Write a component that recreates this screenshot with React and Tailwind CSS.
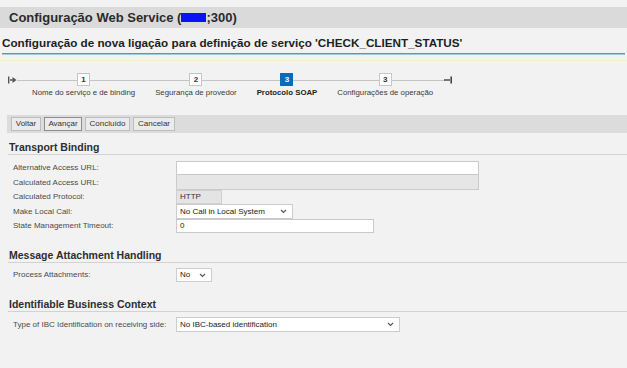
import React from 'react';

const steps = [
  { n: '1', label: 'Nome do serviço e de binding' },
  { n: '2', label: 'Segurança de provedor' },
  { n: '3', label: 'Protocolo SOAP', active: true },
  { n: '3', label: 'Configurações de operação' },
];

const Chevron = () => (
  <svg width="7" height="5" viewBox="0 0 7 5" className="shrink-0">
    <path d="M1 1 L3.5 3.5 L6 1" fill="none" stroke="#555" strokeWidth="1.1" />
  </svg>
);

const SectionTitle = ({ children, className = '' }) => (
  <div className={`ml-[8px] pl-[1px] h-[14px] flex items-center border-b border-[#d2d2d2] text-[10.5px] font-bold text-[#2e2e2e] ${className}`}>
    {children}
  </div>
);

const Row = ({ label, h = 'h-[14px]', children }) => (
  <div className={`grid grid-cols-[176px_1fr] ${h} items-stretch`}>
    <div className="pl-[13px] flex items-center text-[8px] text-[#4a4a4a]">{label}</div>
    <div className="flex">{children}</div>
  </div>
);

const App = () => {
  return (
    <div className="w-[627px] h-[368px] overflow-hidden bg-[#f2f2f2] font-['Liberation_Sans',Arial,sans-serif] text-[#333]">
      {/* Page title */}
      <div className="pt-[7px]">
        <div className="h-[21px] bg-[#dadada] flex items-center pl-[9px] text-[13px] font-bold text-[#2b2b2b]">
          Configuração Web Service (
          <span className="inline-block w-[25px] h-[9px] bg-[#0b12f5]" />
          ;300)
        </div>
      </div>

      <div className="mt-[8px] pl-[2px] h-[14px] flex items-center text-[11.7px] font-bold text-[#1f1f1f]">
        Configuração de nova ligação para definição de serviço 'CHECK_CLIENT_STATUS'
      </div>
      <div className="mt-[3px] mx-[2px] h-[2px] bg-[#3aa3d6] border-b border-[#9fcbe0]" />
      <div className="mt-[5px] h-px bg-[#f6eed0]" />

      {/* Roadmap */}
      <div className="relative h-[54px]">
        <div className="absolute left-[17px] top-[19px] w-[428px] h-px bg-[#c4c4c4]" />
        <svg className="absolute left-[8px] top-[15px]" width="9" height="8" viewBox="0 0 9 8">
          <rect x="0" y="0.5" width="1.4" height="7" fill="#555" />
          <rect x="2" y="3.3" width="3" height="1.4" fill="#555" />
          <path d="M4.5 1 L8.5 4 L4.5 7 Z" fill="#555" />
        </svg>
        <svg className="absolute left-[444px] top-[15px]" width="9" height="8" viewBox="0 0 9 8">
          <rect x="0" y="3.3" width="6" height="1.4" fill="#444" />
          <rect x="6.4" y="0.5" width="1.6" height="7" fill="#444" />
        </svg>
        <div className="relative flex gap-[20px] pl-[32px] pt-[12px]">
          {steps.map((s, i) => (
            <div key={i} className="flex flex-col items-center">
              <div
                className={`w-[13px] h-[13px] flex items-center justify-center text-[8px] font-bold border ${
                  s.active
                    ? 'bg-[#0a6cb8] border-[#0a6cb8] text-white'
                    : 'bg-white border-[#c6c6c6] text-[#333]'
                }`}
              >
                {s.n}
              </div>
              <div
                className={`mt-[2px] leading-[10px] text-[7.8px] whitespace-nowrap ${
                  s.active ? 'font-bold text-[#222]' : 'text-[#3a3a3a]'
                }`}
              >
                {s.label}
              </div>
            </div>
          ))}
        </div>
      </div>

      {/* Toolbar */}
      <div className="ml-[7px] h-[18px] bg-[#dcdcdc] flex items-center gap-[3px] pl-[4px]">
        {[
          ['Voltar', 'w-[30px]'],
          ['Avançar', 'w-[38px]', true],
          ['Concluído', 'w-[45px]'],
          ['Cancelar', 'w-[42px]'],
        ].map(([t, w, focus]) => (
          <div
            key={t}
            className={`${w} h-[14px] flex items-center justify-center text-[8px] text-[#333] bg-[#ebebeb] border ${
              focus ? 'border-[#8d8d8d]' : 'border-[#bdbdbd]'
            }`}
          >
            {t}
          </div>
        ))}
      </div>

      {/* Transport Binding */}
      <SectionTitle className="mt-[8px]">Transport Binding</SectionTitle>
      <div className="mt-[6px] flex flex-col">
        <Row label="Alternative Access URL:">
          <div className="w-[303px] bg-white border border-[#c9c9c9]" />
        </Row>
        <Row label="Calculated Access URL:" h="h-[15px]">
          <div className="w-[303px] bg-[#e6e6e6] border border-[#cbcbcb] border-t-0" />
        </Row>
        <Row label="Calculated Protocol:">
          <div className="w-[46px] bg-[#e4e4e4] border border-[#d0d0d0] flex items-center pl-[3px] text-[8px] text-[#333]">
            HTTP
          </div>
        </Row>
        <Row label="Make Local Call:" h="h-[15px]">
          <div className="w-[117px] bg-white border border-[#cccccc] flex items-center justify-between pl-[3px] pr-[5px] text-[8px] text-[#222]">
            <span>No Call in Local System</span>
            <Chevron />
          </div>
        </Row>
        <Row label="State Management Timeout:">
          <div className="w-[198px] bg-white border border-[#c9c9c9] flex items-center pl-[3px] text-[8px] text-[#222]">
            0
          </div>
        </Row>
      </div>

      {/* Message Attachment Handling */}
      <SectionTitle className="mt-[16px]">Message Attachment Handling</SectionTitle>
      <div className="mt-[5px]">
        <Row label="Process Attachments:">
          <div className="w-[36px] bg-white border border-[#cccccc] flex items-center justify-between pl-[3px] pr-[5px] text-[8px] text-[#222]">
            <span>No</span>
            <Chevron />
          </div>
        </Row>
      </div>

      {/* Identifiable Business Context */}
      <SectionTitle className="mt-[16px]">Identifiable Business Context</SectionTitle>
      <div className="mt-[5px]">
        <Row label="Type of IBC Identification on receiving side:" h="h-[15px]">
          <div className="w-[224px] bg-white border border-[#cccccc] flex items-center justify-between pl-[3px] pr-[5px] text-[8px] text-[#222]">
            <span>No IBC-based identification</span>
            <Chevron />
          </div>
        </Row>
      </div>
    </div>
  );
};

export default App;
